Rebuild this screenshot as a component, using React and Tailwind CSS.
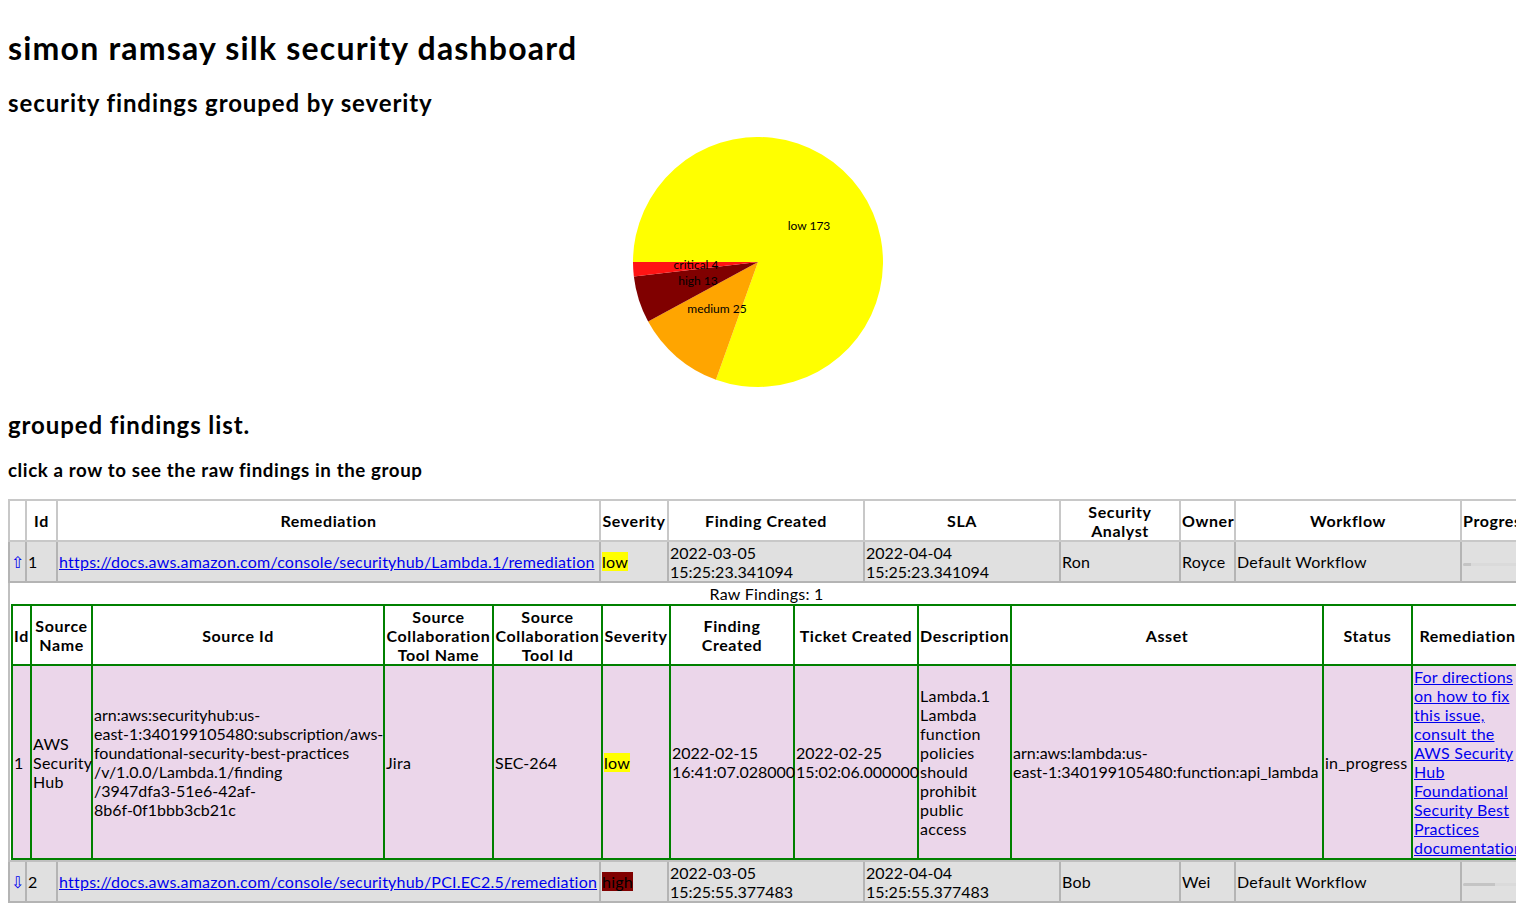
import React from "react";

const LINK = "text-[#0000ee] underline tracking-[0.22px]";

function Pie() {
  return (
    <svg width="250" height="250" viewBox="0 0 250 250" className="block">
      <path d="M125,125 L0,125 A125,125 0 1 1 82.92,242.7 Z" fill="#ffff00" />
      <path d="M125,125 L82.92,242.7 A125,125 0 0 1 15.11,184.6 Z" fill="#ffa500" />
      <path d="M125,125 L15.11,184.6 A125,125 0 0 1 0.85,139.59 Z" fill="#800000" />
      <path d="M125,125 L0.85,139.59 A125,125 0 0 1 0,125 Z" fill="#ff1414" />
      <g fontSize="12" textAnchor="middle" fontFamily="Lato, sans-serif" fill="#000">
        <text x="176" y="93">low 173</text>
        <text x="63" y="132">critical 4</text>
        <text x="65" y="148">high 13</text>
        <text x="84" y="176">medium 25</text>
      </g>
    </svg>
  );
}

function Progress({ value }) {
  return (
    <div className="h-[3px] w-[200px] bg-[#dadada] mt-[6px] rounded-[2px] overflow-hidden">
      <div className="h-full bg-[#c4c4c4]" style={{ width: value }} />
    </div>
  );
}

const TH = "border-2 border-[#c8c8c8] bg-white font-bold tracking-[0.6px] text-center align-middle px-[1px] leading-[19px]";
const TD = "border-2 border-[#b4b4b4] bg-[#e0e0e0] text-left align-middle px-[1px] leading-[19px] whitespace-nowrap";
const ITH = "border-2 border-[#008000] bg-white font-bold tracking-[0.6px] text-center align-middle px-[1px] leading-[19px]";
const ITD = "border-2 border-[#008000] bg-[#ebd6ea] text-left align-middle px-[1px] leading-[19px] whitespace-nowrap";
const TR = " tracking-[0.25px]";

function OuterRow({ arrow, id, url, sev, created, sla, analyst, owner, progress }) {
  return (
    <tr className="h-[41px]">
      <td className={TD + " text-[#0000ee] text-[16px]"}>{arrow}</td>
      <td className={TD}>{id}</td>
      <td className={TD}>
        <a className={LINK} href="#">{url}</a>
      </td>
      <td className={TD + TR}>
        {sev === "low" ? (
          <span className="bg-[#ffff00]">low</span>
        ) : (
          <span className="bg-[#800000]">high</span>
        )}
      </td>
      <td className={TD}>
        {created[0]}
        <br />
        {created[1]}
      </td>
      <td className={TD}>
        {sla[0]}
        <br />
        {sla[1]}
      </td>
      <td className={TD + TR}>{analyst}</td>
      <td className={TD + TR}>{owner}</td>
      <td className={TD + TR}>Default Workflow</td>
      <td className={TD}>
        <Progress value={progress} />
      </td>
    </tr>
  );
}

function Lines({ items }) {
  return items.map((t, i) => (
    <React.Fragment key={i}>
      {t}
      {i < items.length - 1 && <br />}
    </React.Fragment>
  ));
}

function InnerTable() {
  return (
    <div className="w-[1511px] ml-[1px]">
      <div className="text-center leading-[19px] h-[21px] pt-[1px] tracking-[0.25px]">Raw Findings: 1</div>
      <table className="border-collapse table-fixed w-[1511px]">
        <thead>
          <tr className="h-[60px]">
            <th className={ITH + " w-[19px]"}>Id</th>
            <th className={ITH + " w-[61px]"}>
              <Lines items={["Source", "Name"]} />
            </th>
            <th className={ITH + " w-[292px]"}>Source Id</th>
            <th className={ITH + " w-[109px]"}>
              <Lines items={["Source", "Collaboration", "Tool Name"]} />
            </th>
            <th className={ITH + " w-[109px]"}>
              <Lines items={["Source", "Collaboration", "Tool Id"]} />
            </th>
            <th className={ITH + " w-[68px]"}>Severity</th>
            <th className={ITH + " w-[124px]"}>
              <Lines items={["Finding", "Created"]} />
            </th>
            <th className={ITH + " w-[124px]"}>Ticket Created</th>
            <th className={ITH + " w-[93px]"}>Description</th>
            <th className={ITH + " w-[312px]"}>Asset</th>
            <th className={ITH + " w-[89px]"}>Status</th>
            <th className={ITH + " w-[111px]"}>Remediation</th>
          </tr>
        </thead>
        <tbody>
          <tr className="h-[194px]">
            <td className={ITD}>1</td>
            <td className={ITD + TR}>
              <Lines items={["AWS", "Security", "Hub"]} />
            </td>
            <td className={ITD}>
              <Lines
                items={[
                  "arn:aws:securityhub:us-",
                  "east-1:340199105480:subscription/aws-",
                  "foundational-security-best-practices",
                  "/v/1.0.0/Lambda.1/finding",
                  "/3947dfa3-51e6-42af-",
                  "8b6f-0f1bbb3cb21c",
                ]}
              />
            </td>
            <td className={ITD + TR}>Jira</td>
            <td className={ITD}>SEC-264</td>
            <td className={ITD + TR}>
              <span className="bg-[#ffff00]">low</span>
            </td>
            <td className={ITD}>
              <Lines items={["2022-02-15", "16:41:07.028000"]} />
            </td>
            <td className={ITD}>
              <Lines items={["2022-02-25", "15:02:06.000000"]} />
            </td>
            <td className={ITD + TR}>
              <Lines
                items={["Lambda.1", "Lambda", "function", "policies", "should", "prohibit", "public", "access"]}
              />
            </td>
            <td className={ITD}>
              <Lines items={["arn:aws:lambda:us-", "east-1:340199105480:function:api_lambda"]} />
            </td>
            <td className={ITD + TR}>in_progress</td>
            <td className={ITD + " overflow-hidden"}>
              <a className={LINK} href="#">
                <Lines
                  items={[
                    "For directions",
                    "on how to fix",
                    "this issue,",
                    "consult the",
                    "AWS Security",
                    "Hub",
                    "Foundational",
                    "Security Best",
                    "Practices",
                    "documentation",
                  ]}
                />
              </a>
            </td>
          </tr>
        </tbody>
      </table>
    </div>
  );
}

export default function App() {
  return (
    <div className="h-screen w-screen overflow-hidden bg-white text-black font-['Lato',sans-serif] text-[16px]">
      <div className="px-2">
        <h1 className="mt-[29px] text-[32px] font-bold leading-[38px] tracking-[1.2px]">simon ramsay silk security dashboard</h1>
        <h2 className="mt-[22px] text-[24px] font-bold leading-[28px] tracking-[0.9px]">security findings grouped by severity</h2>
        <div className="mt-[20px] flex justify-center">
          <Pie />
        </div>
        <h2 className="mt-[24px] text-[24px] font-bold leading-[28px] tracking-[0.9px]">grouped findings list.</h2>
        <h4 className="mt-[20px] text-[18.72px] font-bold leading-[22px] tracking-[0.6px]">click a row to see the raw findings in the group</h4>
        <table className="mt-[18px] border-collapse table-fixed w-[1652px] border border-[#c0c0c0]">
          <thead>
            <tr className="h-[41px]">
              <th className={TH + " w-[17px]"}></th>
              <th className={TH + " w-[31px]"}>Id</th>
              <th className={TH + " w-[543px]"}>Remediation</th>
              <th className={TH + " w-[68px]"}>Severity</th>
              <th className={TH + " w-[196px]"}>Finding Created</th>
              <th className={TH + " w-[196px]"}>SLA</th>
              <th className={TH + " w-[120px]"}>
                <Lines items={["Security", "Analyst"]} />
              </th>
              <th className={TH + " w-[55px]"}>Owner</th>
              <th className={TH + " w-[226px]"}>Workflow</th>
              <th className={TH + " w-[200px] !text-left"}>Progress</th>
            </tr>
          </thead>
          <tbody>
            <OuterRow
              arrow="⇧"
              id="1"
              url="https://docs.aws.amazon.com/console/securityhub/Lambda.1/remediation"
              sev="low"
              created={["2022-03-05", "15:25:23.341094"]}
              sla={["2022-04-04", "15:25:23.341094"]}
              analyst="Ron"
              owner="Royce"
              progress="8px"
            />
            <tr>
              <td colSpan={10} className="border-2 border-[#c0c0c0] bg-white p-0 align-top">
                <InnerTable />
              </td>
            </tr>
            <OuterRow
              arrow="⇩"
              id="2"
              url="https://docs.aws.amazon.com/console/securityhub/PCI.EC2.5/remediation"
              sev="high"
              created={["2022-03-05", "15:25:55.377483"]}
              sla={["2022-04-04", "15:25:55.377483"]}
              analyst="Bob"
              owner="Wei"
              progress="32px"
            />
          </tbody>
        </table>
      </div>
    </div>
  );
}
